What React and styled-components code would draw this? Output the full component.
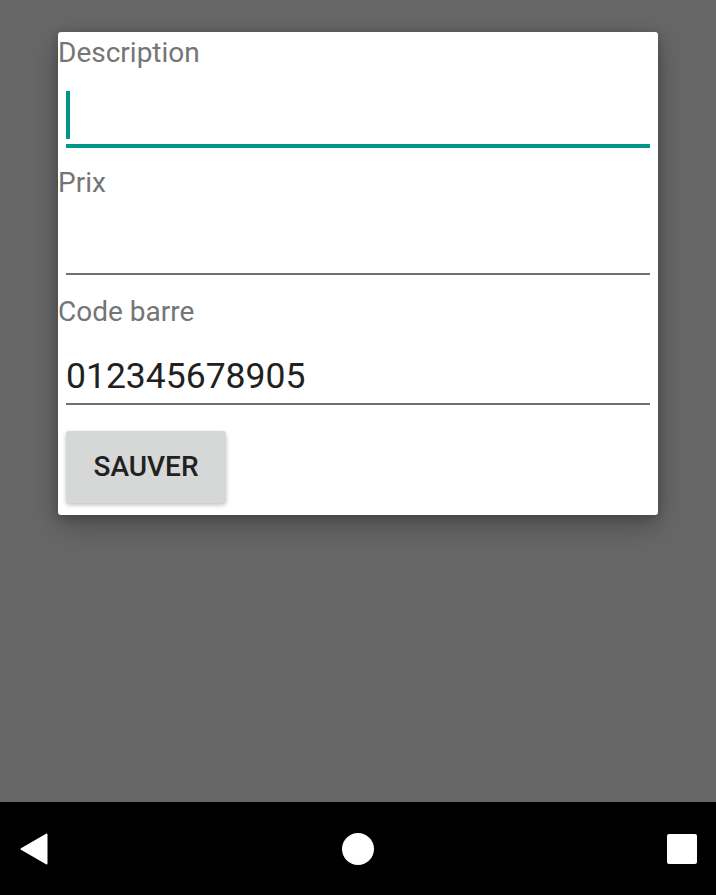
import React from "react"
import styled, { createGlobalStyle } from "styled-components"

const Global = createGlobalStyle`
    html, body {
        margin: 0;
        padding: 0;
        background: #676767;
        font-family: Roboto, "Noto Sans", sans-serif;
    }
`

const Screen = styled.div`
    display: flex;
    flex-direction: column;
    height: 895px;
    width: 716px;
    background: #676767;
`

const Content = styled.div`
    flex: 1;
    padding: 32px 58px 0 58px;
`

const Dialog = styled.div`
    background: #ffffff;
    border-radius: 3px;
    height: 483px;
    box-sizing: border-box;
    padding-top: 6px;
    box-shadow: 0 10px 28px rgba(0, 0, 0, 0.28), 0 2px 10px rgba(0, 0, 0, 0.2);
`

const Field = styled.div`
    display: flex;
    flex-direction: column;
`

const Label = styled.div`
    font-size: 28px;
    line-height: 30px;
    color: #757575;
`

const InputBox = styled.div`
    margin: 0 8px ${p => 24 - (p.$focused ? 4 : 2)}px 8px;
    height: 69.5px;
    padding-bottom: 6px;
    border-bottom: ${p => (p.$focused ? "4px solid #009688" : "2px solid #6f6f6f")};
    display: flex;
    align-items: flex-end;
`

const Value = styled.div`
    font-size: 35.5px;
    line-height: 41px;
    color: #212121;
`

const Cursor = styled.div`
    width: 4px;
    height: 48px;
    background: #009688;
    margin-bottom: -1.5px;
`

const Button = styled.div`
    margin: 4px 0 0 8px;
    width: 160px;
    height: 72px;
    display: flex;
    align-items: center;
    justify-content: center;
    background: #d6d7d7;
    border-radius: 3px;
    box-shadow: 0 2px 4px rgba(0, 0, 0, 0.25);
    font-size: 28px;
    font-weight: 500;
    color: #212121;
`

const NavBar = styled.div`
    height: 93px;
    background: #000000;
    display: flex;
    align-items: center;
    justify-content: space-between;
    padding: 0 19px 0 20px;
`

function TextField({ label, value, focused }) {
    return (
        <Field>
            <Label>{label}</Label>
            <InputBox $focused={focused}>
                {focused ? <Cursor /> : <Value>{value}</Value>}
            </InputBox>
        </Field>
    )
}

export default function App() {
    return (
        <Screen>
            <Global />
            <Content>
                <Dialog>
                    <TextField label="Description" focused />
                    <TextField label="Prix" value="" />
                    <TextField label="Code barre" value="012345678905" />
                    <Button>SAUVER</Button>
                </Dialog>
            </Content>
            <NavBar>
                <svg width="28" height="32" viewBox="0 0 28 32">
                    <path d="M26.5 1.5 L26.5 30.5 L1.5 16 Z" fill="#fff" stroke="#fff" strokeWidth="2" strokeLinejoin="round" />
                </svg>
                <svg width="32" height="32" viewBox="0 0 32 32">
                    <circle cx="16" cy="16" r="16" fill="#fff" />
                </svg>
                <svg width="30" height="30" viewBox="0 0 30 30">
                    <rect x="0" y="0" width="30" height="30" rx="2" fill="#fff" />
                </svg>
            </NavBar>
        </Screen>
    )
}
